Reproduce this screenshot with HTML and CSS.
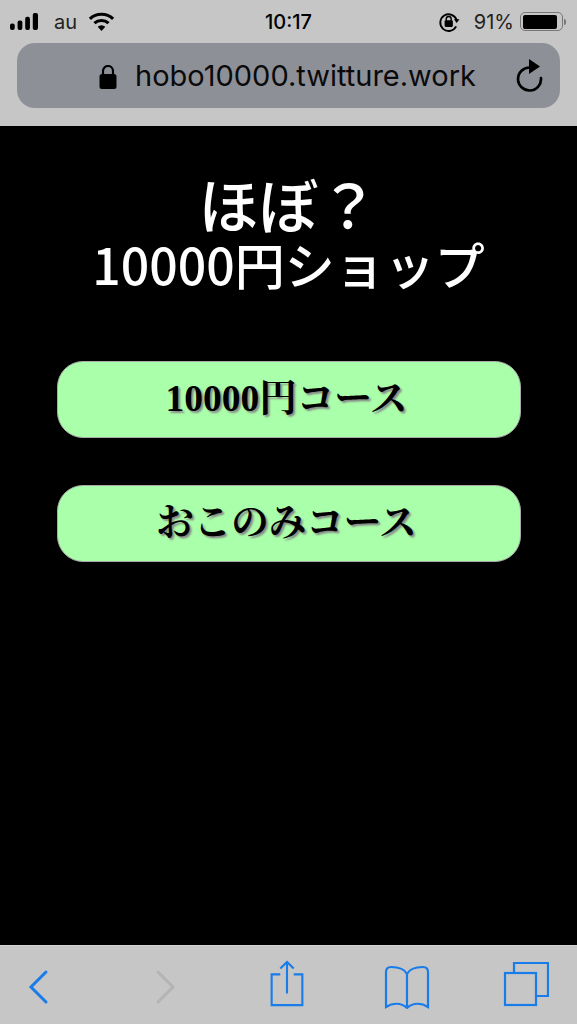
FILE: index.html
```html
<!DOCTYPE html>
<html lang="ja">
<head>
  <meta charset="UTF-8" />
  <meta name="viewport" content="width=device-width, initial-scale=1.0"/>
  <title>ほぼ？10000円ショップ</title>
  <link rel="stylesheet" href="styles.css">
</head>
<body>

  <!-- Browser top -->
  <div class="topbar">
    <div class="statusbar">
      <div class="status-left">
        <svg class="signal" width="28" height="17" viewBox="0 0 29.500 18" preserveAspectRatio="none">
          <rect x="0" y="11" width="5" height="7" rx="2.200" fill="#000"/>
          <rect x="8" y="8" width="5" height="10" rx="2" fill="#000"/>
          <rect x="16" y="4" width="5" height="14" rx="2" fill="#000"/>
          <rect x="24" y="0" width="5.500" height="18" rx="2" fill="#000"/>
        </svg>
        <span class="carrier">au</span>
        <svg class="wifi" width="27" height="19" viewBox="0 0 25 18">
          <path d="M1.500 6.500a16 16 0 0 1 22 0" fill="none" stroke="#000" stroke-width="3"/>
          <path d="M5.800 10.600a10 10 0 0 1 13.400 0" fill="none" stroke="#000" stroke-width="3"/>
          <path d="M12.500 18l-3.600-4a5.200 5.200 0 0 1 7.200 0z" fill="#000"/>
        </svg>
      </div>
      <div class="status-time">10:17</div>
      <div class="status-right">
        <svg class="rotate-lock" width="22" height="22" viewBox="0 0 20 20">
          <path d="M17 8.500A7.600 7.600 0 1 0 16.500 14" fill="none" stroke="#000" stroke-width="1.700"/>
          <path d="M14.500 7.500h5l-2.500 3.500z" fill="#000"/>
          <rect x="6" y="8.500" width="7.500" height="6" rx="1" fill="#000"/>
          <path d="M7.500 9V7.200a2.200 2.200 0 0 1 4.500 0V9" fill="none" stroke="#000" stroke-width="1.300"/>
        </svg>
        <span class="battery-text">91%</span>
        <div class="battery"><div class="battery-fill"></div></div>
        <div class="battery-tip"></div>
      </div>
    </div>
    <div class="urlbar">
      <svg class="lock" width="18" height="24" viewBox="0 0 18 24">
        <rect x="0.500" y="9" width="17" height="15" rx="2.500" fill="#000"/>
        <path d="M4 10V6a5 5 0 0 1 10 0v4" fill="none" stroke="#000" stroke-width="2.200"/>
      </svg>
      <span class="url">hobo10000.twitture.work</span>
      <svg class="reload" width="28" height="33" viewBox="0 0 28 33">
        <path d="M15 8.500A11.500 11.500 0 1 0 26 19" fill="none" stroke="#000" stroke-width="2.700" stroke-linecap="round"/>
        <path d="M14 0l11 7.500L14 15z" fill="#000"/>
      </svg>
    </div>
  </div>

  <!-- Page -->
  <div class="main-content">
    <h1 class="shop-title">
      <span class="title-first">ほぼ？</span>
      <span class="title-second">10000円ショップ</span>
    </h1>
    <a class="course-button" href="#">10000円コース</a>
    <a class="course-button" href="#">おこのみコース</a>
  </div>

  <!-- Browser bottom -->
  <div class="toolbar">
    <div class="tool">
      <svg width="26" height="36" viewBox="0 0 26 36">
        <path d="M20 3L5 18l15 15" fill="none" stroke="#1a7ce8" stroke-width="3" stroke-linecap="round"/>
      </svg>
    </div>
    <div class="tool">
      <svg width="26" height="36" viewBox="0 0 26 36">
        <path d="M5 3l15 15L5 33" fill="none" stroke="#b4b4b4" stroke-width="3" stroke-linecap="round"/>
      </svg>
    </div>
    <div class="tool share-icon">
      <svg width="36" height="48" viewBox="0 0 36 50">
        <path d="M11 16H2v32h32V16h-9M18 36V3M11 10l7-7 7 7" fill="none" stroke="#1a7ce8" stroke-width="2.200"/>
      </svg>
    </div>
    <div class="tool book-icon">
      <svg width="48" height="44" viewBox="0 0 48 44">
        <path d="M24 9C21 3 14 2 8 2 5 2 3 4 3 7v35c6-4 15-5 21 1 6-6 15-5 21-1V7c0-3-2-5-5-5-6 0-13 1-16 7zM24 9v33" fill="none" stroke="#1a7ce8" stroke-width="2.200"/>
      </svg>
    </div>
    <div class="tool tabs-icon">
      <svg width="46" height="46" viewBox="0 0 46 46">
        <path d="M11 12V2h34v33H33" fill="none" stroke="#1a7ce8" stroke-width="2.200"/>
        <rect x="2" y="12" width="31" height="32" fill="none" stroke="#1a7ce8" stroke-width="2.200"/>
      </svg>
    </div>
  </div>

</body>
</html>
```

FILE: styles.css
```css
body {
  margin: 0;
  height: 1024px;
  display: flex;
  flex-direction: column;
  font-family: "Noto Sans CJK JP", sans-serif;
  background-color: #000;
  overflow: hidden;
}

.topbar {
  height: 126px;
  flex-shrink: 0;
  background-color: #c6c6c6;
  box-sizing: border-box;
  padding: 0 17px;
  font-family: Inter, "Liberation Sans", sans-serif;
  color: #000;
}

.statusbar {
  height: 43px;
  margin: 0 -7px;
  display: grid;
  grid-template-columns: 1fr auto 1fr;
  align-items: center;
  font-size: 20px;
}

.status-left {
  display: flex;
  align-items: center;
  gap: 11px;
}

.carrier {
  color: #222;
  margin-left: 5px;
}

.status-time {
  font-size: 20px;
  font-weight: 500;
}

.status-right {
  display: flex;
  align-items: center;
  justify-content: flex-end;
  margin-right: 1px;
}

.battery-text {
  margin-left: 14px;
  margin-right: 6px;
  color: #222;
}

.battery {
  width: 43px;
  height: 19px;
  box-sizing: border-box;
  border: 1.500px solid #777;
  border-radius: 5px;
  padding: 1.500px;
}

.battery-fill {
  width: 91%;
  height: 100%;
  background-color: #000;
  border-radius: 2px;
}

.battery-tip {
  width: 2px;
  height: 6px;
  margin-left: 1px;
  background-color: #777;
  border-radius: 0 2px 2px 0;
}

.urlbar {
  height: 65px;
  position: relative;
  display: flex;
  align-items: center;
  justify-content: center;
  gap: 18px;
  padding-left: 4px;
  padding-right: 6px;
  box-sizing: border-box;
  background-color: #8e9098;
  border-radius: 18px;
}

.url {
  font-size: 29px;
  color: #0a0a0a;
  white-space: nowrap;
}

.lock {
  margin-top: 2px;
}

.reload {
  position: absolute;
  right: 17px;
  top: 16px;
}

.main-content {
  flex: 1;
  display: flex;
  flex-direction: column;
  align-items: center;
  background-color: #000;
}

.shop-title {
  margin: 44px 0 70px;
  color: #fff;
  font-weight: 500;
  text-align: center;
}

.title-first {
  display: block;
  font-size: 60px;
  line-height: 66px;
}

.title-second {
  display: block;
  font-size: 50px;
  line-height: 55px;
}

.course-button {
  width: 464px;
  height: 77px;
  box-sizing: border-box;
  margin-bottom: 47px;
  padding: 0 4px 10px 0;
  display: flex;
  align-items: center;
  justify-content: center;
  background-color: #aaffaa;
  border: 1px solid #aaa;
  border-radius: 26px;
  color: #000;
  font-family: "Liberation Serif", "Noto Serif CJK JP", "Noto Sans CJK JP", serif;
  font-size: 37.500px;
  font-weight: bold;
  text-decoration: none;
  text-shadow: 2px 2px 2px #888;
}

.toolbar {
  height: 79px;
  flex-shrink: 0;
  box-sizing: border-box;
  display: grid;
  grid-template-columns: 127px 121px 120px 119px 48px;
  align-items: center;
  padding: 4px 0 0 15px;
  background-color: #c6c6c6;
  border-top: 1px solid #d4d4d4;
}

.tool {
  width: 48px;
  display: flex;
  justify-content: center;
}

.share-icon {
  margin-bottom: 8px;
}

.book-icon {
  margin-bottom: 1px;
}

.tabs-icon {
  margin-bottom: 6px;
}
```
